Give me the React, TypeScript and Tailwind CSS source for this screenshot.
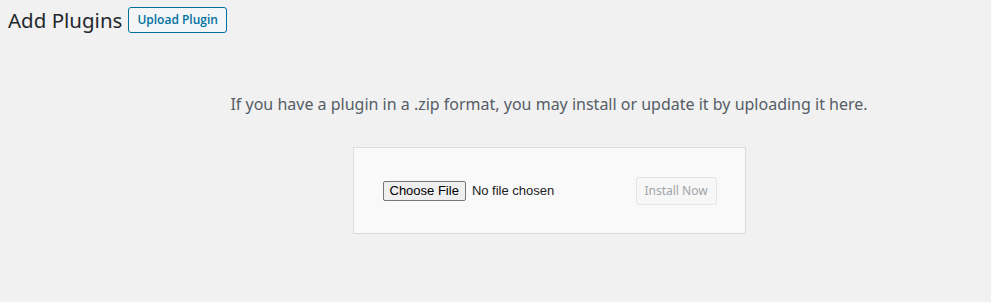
export default function App() {
  return (
    <div className="min-h-[302px] w-full bg-[#f1f1f1] font-['Open_Sans',sans-serif] text-[#23282d]">
      <div className="flex items-center gap-[6px] pl-[8px] pt-[7px]">
        <h1 className="font-['Noto_Sans',sans-serif] text-[20.5px] leading-[26px] font-normal">Add Plugins</h1>
        <button className="h-[26px] rounded-[3px] border border-[#0071a1] bg-[#f3f5f6] px-[8px] text-[12px] font-semibold text-[#0071a1] leading-none">
          Upload Plugin
        </button>
      </div>

      <div className="flex flex-col items-center pl-[107px] pt-[61px]">
        <p className="text-[16px] leading-[20px] text-[#555d66] font-['Noto_Sans',sans-serif]">
          If you have a plugin in a .zip format, you may install or update it by uploading it here.
        </p>
        <div className="mt-[33px] flex h-[87px] w-[393px] items-center justify-between border border-[#dcdcde] bg-[#f9f9f9] pl-[29px] pr-[28px]">
          <div className="flex items-center gap-[6px] font-['Liberation_Sans',sans-serif] text-[13px]">
            <span className="h-[20px] rounded-[2px] border border-[#767676] bg-[#efefef] px-[6px] leading-[18px] text-black">
              Choose File
            </span>
            <span className="text-[#222]">No file chosen</span>
          </div>
          <button className="h-[28px] w-[81px] rounded-[3px] border border-[#e2e4e7] bg-[#f7f7f7] text-[12px] text-[#a0a5aa] font-['Noto_Sans',sans-serif]">
            Install Now
          </button>
        </div>
      </div>
    </div>
  );
}
